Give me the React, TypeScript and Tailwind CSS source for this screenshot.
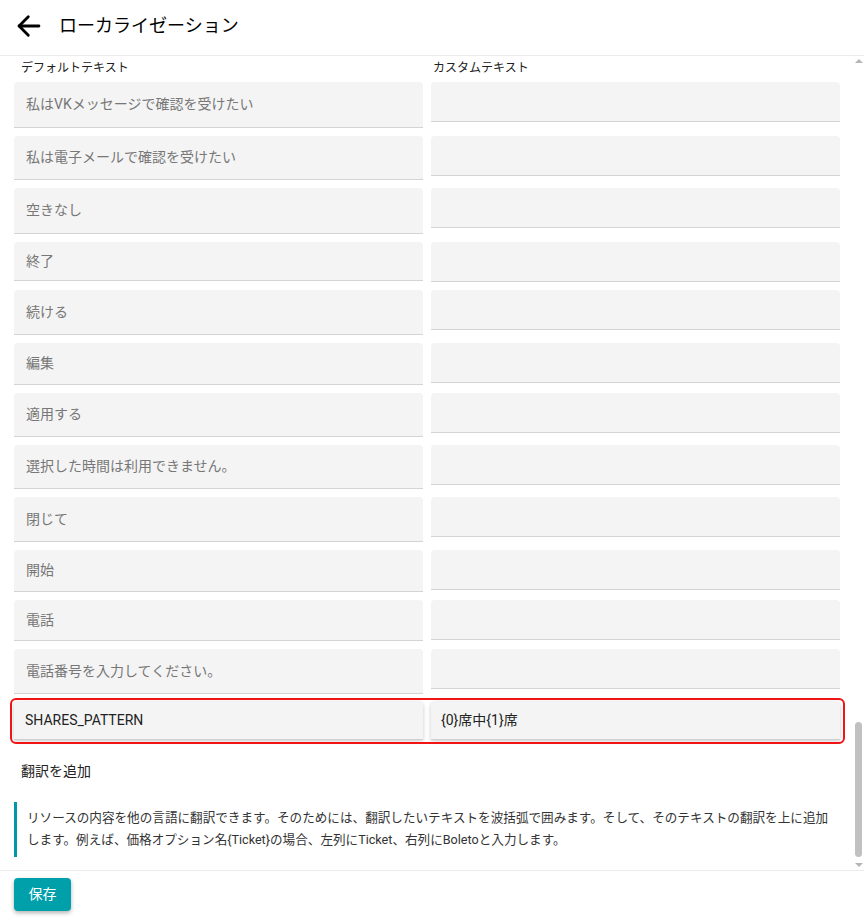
import React from "react";

const FONT = { fontFamily: "Roboto, 'Noto Sans CJK JP', sans-serif" };

const rows: { t: string; h: string }[] = [
  { t: "私はVKメッセージで確認を受けたい", h: "h-[46px]" },
  { t: "私は電子メールで確認を受けたい", h: "h-[44px]" },
  { t: "空きなし", h: "h-[46px]" },
  { t: "終了", h: "h-[39px]" },
  { t: "続ける", h: "h-[45px]" },
  { t: "編集", h: "h-[42px]" },
  { t: "適用する", h: "h-[44px]" },
  { t: "選択した時間は利用できません。", h: "h-[44px]" },
  { t: "閉じて", h: "h-[45px]" },
  { t: "開始", h: "h-[42px]" },
  { t: "電話", h: "h-[41px]" },
  { t: "電話番号を入力してください。", h: "h-[45px]" },
];

export default function App() {
  return (
    <div className="w-[864px] h-[919px] bg-white overflow-hidden flex flex-col text-[#212121]" style={FONT}>
      {/* Header */}
      <div className="h-[56px] shrink-0 flex items-center border-b border-[#ececec]">
        <div className="ml-[12px] w-[34px] h-[34px] -mt-[4px] flex items-center justify-center">
          <svg width="34" height="34" viewBox="0 0 24 24" fill="none" stroke="#000" strokeWidth="2" strokeLinecap="round" strokeLinejoin="round">
            <path d="M19 12H5" />
            <path d="M11.5 18.5 5 12l6.5-6.5" />
          </svg>
        </div>
        <div className="ml-[13px] text-[18px] leading-[24px] text-black -mt-[3px]">ローカライゼーション</div>
      </div>

      {/* Scroll area */}
      <div className="h-[814px] shrink-0 flex">
        <div className="flex-1 min-w-0 pl-[14px] pr-[13px] overflow-hidden">
          <div className="grid grid-cols-2 gap-x-[8px] pt-[4px] pb-[6px]">
            <div className="pl-[7px] text-[12px] leading-[16px] text-[#212121]">デフォルトテキスト</div>
            <div className="pl-[2px] text-[12px] leading-[16px] text-[#212121]">カスタムテキスト</div>
          </div>

          {rows.map((r, i) => (
            <div key={i} className="grid grid-cols-2 gap-x-[8px] items-start mb-[8px]">
              <div className={`${r.h} min-w-0 bg-[#f4f4f4] rounded-t-[4px] border-b border-[#d4d4d4] flex items-center pl-[12px] text-[14px] text-[#777777]`}>
                {r.t}
              </div>
              <div className="h-[40px] min-w-0 bg-[#f4f4f4] rounded-t-[4px] border-b border-[#d4d4d4]" />
            </div>
          ))}

          <div className="relative grid grid-cols-2 gap-x-[8px] items-start mt-[1px]">
            <div className="absolute -left-[4px] -right-[5px] -top-[4px] -bottom-[4px] border-2 border-[#f01414] rounded-[6px] pointer-events-none" />
            <div className="h-[38px] min-w-0 bg-[#f4f4f4] rounded-t-[4px] border-b border-[#cfcfcf] shadow-[0_1px_4px_rgba(0,0,0,0.22)] flex items-center pl-[11px] text-[14px] text-[#222]">
              SHARES_PATTERN
            </div>
            <div className="h-[38px] min-w-0 bg-[#f4f4f4] rounded-t-[4px] border-b border-[#cfcfcf] shadow-[0_1px_4px_rgba(0,0,0,0.22)] flex items-center pl-[10px] text-[14px] text-[#222]">
              {"{0}席中{1}席"}
            </div>
          </div>

          <div className="mt-[21px] pl-[7px] text-[14px] leading-[20px] text-[#222]">翻訳を追加</div>

          <div className="mt-[21px] border-l-[3px] border-[#0097a7] pl-[10px] pt-[5px] pb-[6px] text-[12.6px] leading-[22px] text-[#333]">
            リソースの内容を他の言語に翻訳できます。そのためには、翻訳したいテキストを波括弧で囲みます。そして、そのテキストの翻訳を上に追加します。例えば、価格オプション名{"{Ticket}"}の場合、左列にTicket、右列にBoletoと入力します。
          </div>
        </div>

        {/* Scrollbar */}
        <div className="w-[11px] shrink-0 flex flex-col items-center relative">
          <div className="mt-[3px] w-0 h-0 border-l-[4px] border-r-[4px] border-b-[4px] border-l-transparent border-r-transparent border-b-[#b5b5b5]" />
          <div className="mt-[659px] w-[7px] h-[135px] rounded-full bg-[#c1c1c1]" />
          <div className="mt-[6px] w-0 h-0 border-l-[4px] border-r-[4px] border-t-[4px] border-l-transparent border-r-transparent border-t-[#b5b5b5]" />
        </div>
      </div>

      {/* Footer */}
      <div className="flex-1 border-t border-[#ececec] pl-[14px] pt-[7px]">
        <button className="w-[57px] h-[33px] rounded-[4px] bg-[#00a0aa] text-white text-[14px] shadow-[0_2px_4px_rgba(0,0,0,0.3)] flex items-center justify-center">
          保存
        </button>
      </div>
    </div>
  );
}
